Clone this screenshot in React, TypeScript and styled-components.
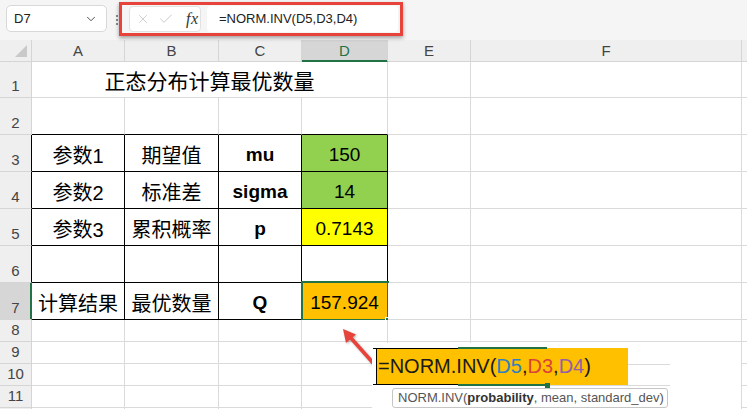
import React from 'react'
import styled, { createGlobalStyle } from 'styled-components'
import { ChevronDown, X, Check } from 'lucide-react'

const c = {
  grid: '#dadada',
  head: '#efefef',
  headLine: '#d5d5d5',
  active: '#d6d6d6',
  green: '#217346',
  black: '#000',
  lime: '#92d050',
  yellow: '#ffff00',
  amber: '#ffc000',
  red: '#e8433b',
  bar: '#f5f5f5',
}

const cols = [32, 93, 94, 83, 86, 83, 271, 30]
const rows = [22, 36, 37, 37, 37, 37, 37, 37, 22, 22, 22, 22, 10]

type Kind = 'cjk' | 'num' | 'bold' | 'title'
type Def = { t?: React.ReactNode, k?: Kind, span?: number, bg?: string, r?: string, b?: string, sel?: boolean }
type RowDef = { n: string, edge?: 'line' | 'active', cells: Def[] }

const T = c.black
const box = (t: string, k: Kind, bg?: string, sel?: boolean): Def => ({ t, k, bg, r: T, b: T, sel })
const blank = (n: number): Def[] => Array.from({ length: n }, () => ({}))

const sheet: RowDef[] = [
  { n: '1', cells: [{ t: '正态分布计算最优数量', k: 'title', span: 4 }, ...blank(3)] },
  { n: '2', cells: [{ b: T }, { b: T }, { b: T }, { b: T }, ...blank(3)] },
  { n: '3', edge: 'line', cells: [box('参数1', 'cjk'), box('期望值', 'cjk'), box('mu', 'bold'), box('150', 'num', c.lime), ...blank(3)] },
  { n: '4', edge: 'line', cells: [box('参数2', 'cjk'), box('标准差', 'cjk'), box('sigma', 'bold'), box('14', 'num', c.lime), ...blank(3)] },
  { n: '5', edge: 'line', cells: [box('参数3', 'cjk'), box('累积概率', 'cjk'), box('p', 'bold'), box('0.7143', 'num', c.yellow), ...blank(3)] },
  { n: '6', edge: 'line', cells: [box('', 'cjk'), box('', 'cjk'), box('', 'cjk'), box('', 'num'), ...blank(3)] },
  { n: '7', edge: 'active', cells: [box('计算结果', 'cjk'), box('最优数量', 'cjk'), box('Q', 'bold'), box('157.924', 'num', c.amber, true), ...blank(3)] },
  { n: '8', cells: blank(7) },
  { n: '9', cells: blank(7) },
  { n: '10', cells: blank(7) },
  { n: '11', cells: blank(7) },
  // row 12 only shows its top pixel, so no label
  { n: '', cells: blank(7) },
]

const letters = ['A', 'B', 'C', 'D', 'E', 'F', '']

export default function App() {
  return (
    <Page>
      <GlobalStyle />
      <TopBar>
        <NameBox>
          <span>D7</span>
          <ChevronDown size={14} strokeWidth={1.6} color='#444' />
        </NameBox>
        <Grip />
        <EditButtons>
          <X size={14} strokeWidth={1.1} color='#b4b4b4' />
          <Check size={16} strokeWidth={1.1} color='#b4b4b4' />
          <Fx>fx</Fx>
        </EditButtons>
        <FormulaBox>=NORM.INV(D5,D3,D4)</FormulaBox>
      </TopBar>

      <Sheet>
        <Corner><Triangle /></Corner>
        {letters.map((l, i) => <ColHead key={i} $active={l == 'D'}>{l}</ColHead>)}
        {sheet.map((row, r) => (
          <React.Fragment key={r}>
            <RowHead $edge={row.edge}>{row.n}</RowHead>
            {row.cells.map((d, i) => (
              <Cell key={i} $bg={d.bg} $r={d.r} $b={d.b} $span={d.span} $k={d.k}>
                {d.t}
                {d.sel && <Selection><Handle /></Selection>}
              </Cell>
            ))}
          </React.Fragment>
        ))}
      </Sheet>

      <Callout />

      <Arrow width='52' height='54' viewBox='0 0 52 54'>
        <line x1='44' y1='46' x2='20' y2='19' stroke={c.red} strokeWidth='3.6' strokeLinecap='round' />
        <polygon points='13,11 26,16.5 16,25' fill={c.red} />
      </Arrow>

      <EditShot>
        <GridSeg style={{ left: 256, top: 21, width: 42 }} />
        <GridSeg style={{ left: 175, top: 42, width: 123 }} />
        <EditBar>
          <Edge $left={-4} $w={85} $color={c.black} $top />
          <Edge $left={81} $w={89} $color={c.green} $top $thick />
          <Edge $left={-4} $w={85} $color={c.black} />
          <Edge $left={81} $w={89} $color={c.green} $thick />
          <EdgeHandle />
          =NORM.INV(<Ref $color='#2f7fc1'>D5</Ref>,<Ref $color='#d9443a'>D3</Ref>,<Ref $color='#9160a8'>D4</Ref>)
        </EditBar>
        <Tip>NORM.INV(<b>probability</b>, mean, standard_dev)</Tip>
      </EditShot>
    </Page>
  )
}

const GlobalStyle = createGlobalStyle`
  * { box-sizing: border-box; }
  body { margin: 0; background: #fff; overflow: hidden; }
`

const Page = styled.div` position: relative; width: 747px; height: 409px; overflow: hidden; font-family: "Liberation Sans", "Noto Sans CJK SC", sans-serif; `

const TopBar = styled.div` height: 40px; display: flex; align-items: flex-start; padding: 5px 0 0 6px; background: ${c.bar}; `
const NameBox = styled.div`
  width: 101px; height: 27px; display: flex; align-items: center; justify-content: space-between;
  padding: 0 8px 0 7px; background: #fff; border: 1px solid #d8d8d8; border-radius: 5px;
  font-size: 13px; color: #222;
`
const Grip = styled.div` width: 2px; height: 10px; margin: 10px 0 0 9px; background: repeating-linear-gradient(#8a8a8a 0 2px, transparent 2px 4px); `
const EditButtons = styled.div`
  width: 72px; height: 26px; margin: 1px 0 0 11px; display: flex; align-items: center; gap: 8px;
  padding-left: 6px; background: #fff; border: 1px solid #e2e2e2; border-radius: 4px;
`
const Fx = styled.span` margin-left: 4px; font: italic 16px "Liberation Serif", serif; color: #333; letter-spacing: 0.5px; `
const FormulaBox = styled.div`
  width: 191px; height: 26px; margin: 1px 0 0 6px; padding-left: 12px; line-height: 26px;
  background: #fff; border-radius: 4px; font-size: 13px; color: #222; white-space: nowrap; overflow: hidden;
`

const Sheet = styled.div`
  display: grid; width: 747px;
  grid-template-columns: ${cols.map(w => w + 'px').join(' ')};
  grid-template-rows: ${rows.map(h => h + 'px').join(' ')};
`
const ColHead = styled.div<{ $active?: boolean }>`
  display: flex; align-items: center; justify-content: center;
  background: ${p => p.$active ? c.active : c.head};
  border-right: 1px solid ${c.headLine};
  border-bottom: 1px solid ${p => p.$active ? c.green : c.headLine};
  box-shadow: ${p => p.$active ? `inset 0 -1px 0 ${c.green}` : 'none'};
  font-size: 15px; color: ${p => p.$active ? c.green : '#444'};
`
const Corner = styled(ColHead)` align-items: flex-end; justify-content: flex-end; padding: 0 4px 4px 0; `
const Triangle = styled.div` width: 12px; height: 12px; background: #c9c9c9; clip-path: polygon(100% 0, 100% 100%, 0 100%); `
const RowHead = styled.div<{ $edge?: 'line' | 'active' }>`
  display: flex; align-items: flex-end; justify-content: center; padding-bottom: 3px;
  background: ${p => p.$edge == 'active' ? c.active : c.head};
  border-right: 1px solid ${p => p.$edge == 'line' ? c.black : p.$edge == 'active' ? c.green : c.headLine};
  border-bottom: 1px solid ${c.headLine};
  box-shadow: ${p => p.$edge == 'active' ? `inset -1px 0 0 ${c.green}` : 'none'};
  font-size: 15px; color: #444;
`
const sizes: Record<Kind, string> = {
  cjk: 'font-size: 20px;',
  num: 'font-size: 19px;',
  bold: 'font-size: 19px; font-weight: 700;',
  title: 'font-size: 21px;',
}
const Cell = styled.div<{ $bg?: string, $r?: string, $b?: string, $span?: number, $k?: Kind }>`
  position: relative; grid-column: span ${p => p.$span ?? 1};
  display: flex; align-items: center; justify-content: center; padding-top: ${p => p.$k == 'title' ? 0 : 3}px;
  background: ${p => p.$bg ?? '#fff'};
  border-right: 1px solid ${p => p.$r ?? c.grid};
  border-bottom: 1px solid ${p => p.$b ?? c.grid};
  color: #000; white-space: nowrap;
  ${p => p.$k ? sizes[p.$k] : ''}
`
const Selection = styled.div` position: absolute; top: -2px; left: -1px; right: -2px; bottom: -2px; border: 2px solid ${c.green}; `
const Handle = styled.div` position: absolute; right: -4px; bottom: -4px; width: 6px; height: 6px; background: ${c.green}; border: 1px solid #fff; `

const Callout = styled.div`
  position: absolute; left: 119px; top: 2px; width: 284px; height: 34px;
  border: 3px solid ${c.red}; box-shadow: 0 2px 4px rgba(0, 0, 0, 0.35);
`
const Arrow = styled.svg` position: absolute; left: 330px; top: 318px; filter: drop-shadow(1px 1px 1px rgba(0, 0, 0, 0.3)); `

const EditShot = styled.div` position: absolute; left: 372px; top: 343px; width: 369px; height: 66px; background: #fff; `
const GridSeg = styled.div` position: absolute; height: 1px; background: ${c.grid}; `
const EditBar = styled.div`
  position: relative; width: 252px; height: 37px; margin: 5px 0 0 4px; padding-left: 1px;
  display: flex; align-items: center; background: ${c.amber}; border-left: 1px solid ${c.black};
  font-size: 20px; color: #1a1a1a; white-space: nowrap;
`
const Edge = styled.div<{ $left: number, $w: number, $color: string, $top?: boolean, $thick?: boolean }>`
  position: absolute; left: ${p => p.$left}px; width: ${p => p.$w}px; height: ${p => p.$thick ? 2 : 1}px;
  ${p => p.$top ? `top: ${p.$thick ? -1 : 0}px;` : `bottom: ${p.$thick ? -1 : 0}px;`}
  background: ${p => p.$color};
`
const EdgeHandle = styled.div` position: absolute; left: 168px; bottom: -3px; width: 5px; height: 5px; background: ${c.green}; `
const Ref = styled.span<{ $color: string }>` color: ${p => p.$color}; `
const Tip = styled.div`
  width: 276px; height: 20px; margin: 3px 0 0 20px; padding: 0 5px; line-height: 18px;
  background: #fff; border: 1px solid #c6c6c6; border-radius: 3px;
  font-size: 13px; color: #555; white-space: nowrap;
  & b { color: #333; }
`
